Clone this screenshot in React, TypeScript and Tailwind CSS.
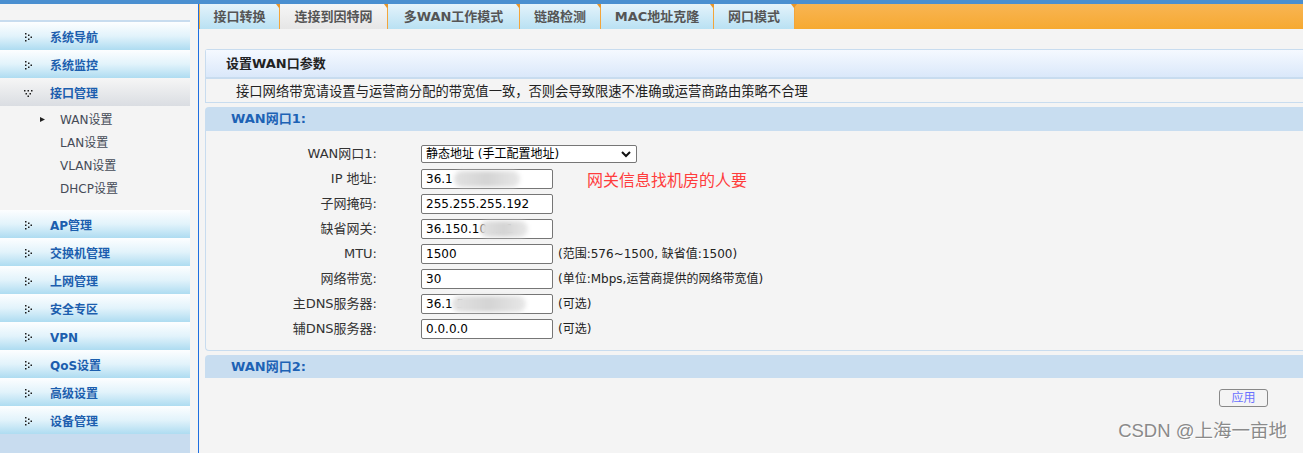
import React from "react";

const FONT = "[font-family:'DejaVu_Sans','Noto_Sans_CJK_SC',sans-serif]";

const topMenu = ["系统导航", "系统监控"];
const bottomMenu = ["AP管理", "交换机管理", "上网管理", "安全专区", "VPN", "QoS设置", "高级设置", "设备管理"];
const subMenu = ["WAN设置", "LAN设置", "VLAN设置", "DHCP设置"];
const tabs: { label: string; w: string; active?: boolean }[] = [
  { label: "接口转换", w: "w-[80px]" },
  { label: "连接到因特网", w: "w-[108px]", active: true },
  { label: "多WAN工作模式", w: "w-[132px]" },
  { label: "链路检测", w: "w-[81px]" },
  { label: "MAC地址克隆", w: "w-[113px]" },
  { label: "网口模式", w: "w-[81px]" },
];

function DotArrow() {
  return (
    <svg width="8" height="9" viewBox="0 0 8 9" className="shrink-0">
      <g fill="#1b1b1b">
        <rect x="0" y="0" width="1.5" height="1.5" />
        <rect x="0" y="3.5" width="1.5" height="1.5" />
        <rect x="0" y="7" width="1.5" height="1.5" />
        <rect x="3" y="1.5" width="1.5" height="1.5" />
        <rect x="3" y="5.5" width="1.5" height="1.5" />
        <rect x="5.5" y="3.5" width="1.5" height="1.5" />
      </g>
    </svg>
  );
}

function DotArrowDown() {
  return (
    <svg width="9" height="8" viewBox="0 0 9 8" className="shrink-0">
      <g fill="#1b1b1b">
        <rect x="0" y="0" width="1.5" height="1.5" />
        <rect x="3.5" y="0" width="1.5" height="1.5" />
        <rect x="7" y="0" width="1.5" height="1.5" />
        <rect x="1.5" y="3" width="1.5" height="1.5" />
        <rect x="5.5" y="3" width="1.5" height="1.5" />
        <rect x="3.5" y="5.5" width="1.5" height="1.5" />
      </g>
    </svg>
  );
}

function MenuItem({ label }: { label: string }) {
  return (
    <div className="flex h-[28px] items-center bg-gradient-to-b from-[#fdfeff] via-[#e2f3fb] to-[#aedcf1] pl-[25px] pt-[3px]">
      <DotArrow />
      <span className="ml-[17px] text-[12px] font-bold text-[#1c5eae]">{label}</span>
    </div>
  );
}

function Blur({ left, width }: { left: string; width: string }) {
  return (
    <span
      className={`absolute top-[1px] h-[16px] ${left} ${width} rounded-full bg-gradient-to-r from-[#e2e2e2] via-[#d4d4d4] to-[#e8e8e8] blur-[2px]`}
    />
  );
}

function Field({
  label,
  value,
  hint,
  blur,
}: {
  label: string;
  value: string;
  hint?: React.ReactNode;
  blur?: { left: string; width: string };
}) {
  return (
    <div className="flex h-[25px] items-center">
      <div className="w-[171px] text-right text-[13px] text-[#333]">{label}</div>
      <div className="relative ml-[44px] flex h-[20px] w-[132px] items-center rounded-[2px] border border-[#767676] bg-white pl-[4px] text-[12px] text-black">
        {value}
        {blur && <Blur left={blur.left} width={blur.width} />}
      </div>
      {hint}
    </div>
  );
}

export default function App() {
  return (
    <div className={`relative h-[453px] w-[1303px] overflow-hidden bg-[#f4f4f4] ${FONT}`}>
      <div className="h-[4px] bg-[#4a8fd0]" />
      <div className="flex h-[449px]">
        {/* sidebar */}
        <aside className="flex w-[190px] shrink-0 flex-col pt-[16px]">
          <div className="h-[2px] bg-[#c8dcef]" />
          {topMenu.map((m) => (
            <MenuItem key={m} label={m} />
          ))}
          <div className="flex h-[28px] items-center bg-gradient-to-b from-[#f6f6f6] to-[#dadde2] pl-[24px] pt-[3px]">
            <DotArrowDown />
            <span className="ml-[17px] text-[12px] font-bold text-[#1c5eae]">接口管理</span>
          </div>
          <div className="pb-[10px] pt-[2px]">
            {subMenu.map((s, i) => (
              <div key={s} className="flex h-[23px] items-center text-[12px] text-[#454b57]">
                <span className="flex w-[60px] justify-end pr-[15px]">
                  {i === 0 && (
                    <svg width="5" height="5" viewBox="0 0 5 5">
                      <path d="M0 0 L5 2.5 L0 5 Z" fill="#222" />
                    </svg>
                  )}
                </span>
                {s}
              </div>
            ))}
          </div>
          {bottomMenu.map((m) => (
            <MenuItem key={m} label={m} />
          ))}
          <div className="flex-1 bg-[#c8dcef]" />
        </aside>
        <div className="w-[8px] shrink-0" />
        <div className="w-[1px] shrink-0 bg-[#1f6fe0]" />

        {/* main */}
        <main className="flex min-w-0 flex-1 flex-col">
          <div className="flex h-[25px] bg-gradient-to-b from-[#f8b552] to-[#f6a930] pl-[1px]">
            {tabs.map((t) => (
              <div
                key={t.label}
                className={`relative flex ${t.w} shrink-0 items-center justify-center border-r border-[#f3a53a] text-[13px] font-bold text-[#555] ${
                  t.active
                    ? "bg-gradient-to-b from-[#f6f6f6] to-[#e6e6e6]"
                    : "bg-gradient-to-b from-[#e4f3fb] to-[#b9e1f3]"
                }`}
              >
                {t.label}
                <span className="absolute -right-[3px] top-0 h-0 w-0 border-x-[3px] border-t-[4px] border-x-transparent border-t-[#e8962a]" />
              </div>
            ))}
          </div>

          <div className="pl-[6px]">
            {/* panel 1 */}
            <div className="mt-[20px] rounded-tl-[3px] border-y border-l border-[#c8dcef]">
              <div className="flex h-[29px] items-center border-b-2 border-[#c8dcef] bg-gradient-to-b from-[#f5f9ff] to-[#dae8fa] pl-[20px] text-[13px] font-bold text-[#222]">
                设置WAN口参数
              </div>
              <div className="flex h-[23px] items-center whitespace-nowrap pl-[30px] text-[13.3px] text-[#222] [font-family:'Noto_Sans_CJK_SC',sans-serif]">
                接口网络带宽请设置与运营商分配的带宽值一致，否则会导致限速不准确或运营商路由策略不合理
              </div>
            </div>

            {/* WAN 1 */}
            <div className="mt-[4px] flex h-[24px] items-center rounded-tl-[4px] bg-[#c8ddf0] pl-[26px] text-[13px] font-bold text-[#1d62b5]">
              WAN网口1:
            </div>
            <div className="rounded-bl-[4px] border-b border-l border-[#c8dcef] pb-[9px] pt-[10px]">
              <div className="flex h-[25px] items-center pt-[1px]">
                <div className="w-[171px] text-right text-[13px] text-[#333]">WAN网口1:</div>
                <div className="ml-[44px] flex h-[18px] w-[216px] items-center justify-between rounded-[2px] border border-[#767676] bg-white pl-[4px] pr-[5px] text-[12px] text-black">
                  静态地址 (手工配置地址)
                  <svg width="10" height="7" viewBox="0 0 10 7">
                    <path d="M1 1 L5 5 L9 1" fill="none" stroke="#111" strokeWidth="2" />
                  </svg>
                </div>
              </div>
              <Field
                label="IP 地址:"
                value="36.1"
                blur={{ left: "left-[32px]", width: "w-[66px]" }}
                hint={
                  <span className="ml-[34px] text-[16px] text-[#ff3c3c] [font-family:'Noto_Sans_CJK_SC',sans-serif]">
                    网关信息找机房的人要
                  </span>
                }
              />
              <Field label="子网掩码:" value="255.255.255.192" />
              <Field
                label="缺省网关:"
                value="36.150.10 ... 1"
                blur={{ left: "left-[58px]", width: "w-[48px]" }}
              />
              <Field
                label="MTU:"
                value="1500"
                hint={<span className="ml-[5px] text-[12px] text-[#222]">(范围:576~1500, 缺省值:1500)</span>}
              />
              <Field
                label="网络带宽:"
                value="30"
                hint={<span className="ml-[5px] text-[12px] text-[#222]">(单位:Mbps,运营商提供的网络带宽值)</span>}
              />
              <Field
                label="主DNS服务器:"
                value="36.1           5"
                blur={{ left: "left-[30px]", width: "w-[74px]" }}
                hint={<span className="ml-[5px] text-[12px] text-[#222]">(可选)</span>}
              />
              <Field
                label="辅DNS服务器:"
                value="0.0.0.0"
                hint={<span className="ml-[5px] text-[12px] text-[#222]">(可选)</span>}
              />
            </div>

            {/* WAN 2 */}
            <div className="mt-[4px] flex h-[23px] items-center rounded-tl-[4px] bg-[#c8ddf0] pl-[26px] text-[13px] font-bold text-[#1d62b5]">
              WAN网口2:
            </div>
            <div className="mr-[35px] mt-[11px] flex justify-end">
              <button className="flex h-[18px] w-[49px] items-center justify-center rounded-[3px] border border-[#888] bg-[#f4f4f4] text-[12px] text-[#6a72ff]">
                应用
              </button>
            </div>
          </div>
        </main>
      </div>

      <div className="absolute bottom-[8px] right-[16px] text-[18.5px] text-[#8a8a8a] [font-family:'Liberation_Sans','Noto_Sans_CJK_SC',sans-serif] [text-shadow:1px_1px_0_#fff]">
        CSDN @上海一亩地
      </div>
    </div>
  );
}
